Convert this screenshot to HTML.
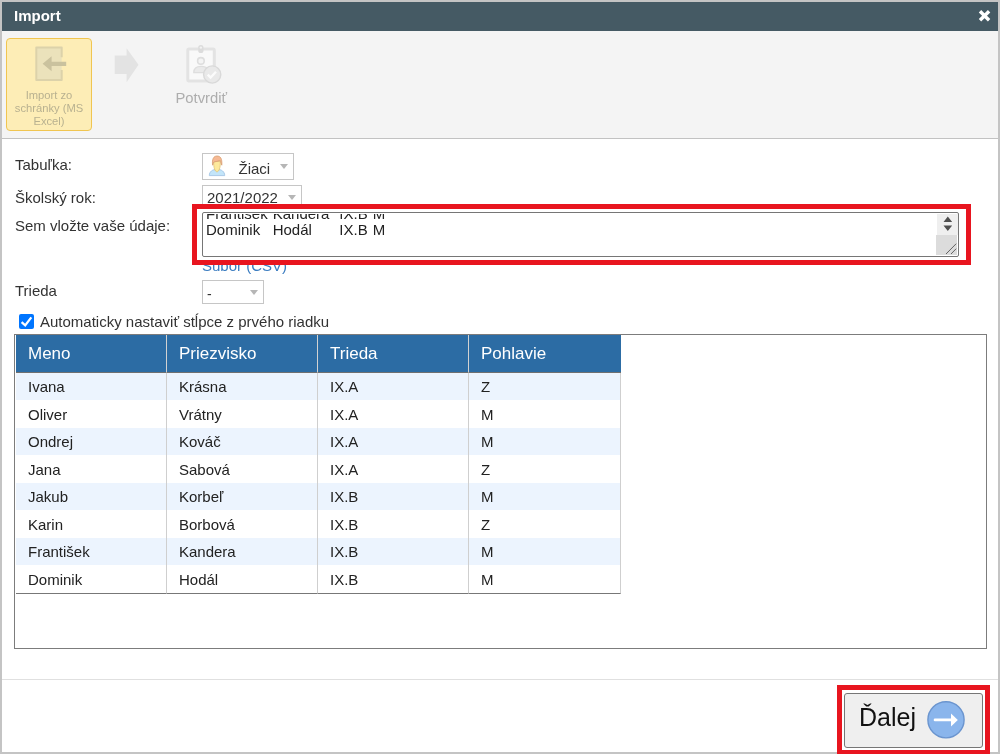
<!DOCTYPE html>
<html><head><meta charset="utf-8">
<style>
*{box-sizing:border-box;margin:0;padding:0}
html,body{width:1000px;height:754px;overflow:hidden;background:#c4c4c4;font-family:"Liberation Sans",sans-serif;position:relative}
.a{position:absolute}
.t{position:absolute;white-space:nowrap;line-height:1}
#dlg{left:2px;top:2px;width:996px;height:750px;background:#fff}
#hdr{left:2px;top:2px;width:996px;height:28.5px;background:#455a64}
#tb{left:2px;top:30.5px;width:996px;height:108px;background:#f4f4f4;border-bottom:1px solid #c2c2c2}
.lbl{font-size:15px;color:#333}
.sel{position:absolute;border:1px solid #c6c6c6;background:#fff}
.caret{position:absolute;width:0;height:0;border-left:4.6px solid transparent;border-right:4.6px solid transparent;border-top:5.5px solid #b6b6b6}
#grid{left:14px;top:334px;width:973px;height:315px;border:1px solid #7c7c7c;background:#fff}
table{border-collapse:separate;border-spacing:0;position:absolute;left:1px;top:0;font-size:15px;color:#222;table-layout:fixed;width:605px}
td,th{white-space:nowrap;text-align:left;font-weight:normal;padding:0 0 0 12px;overflow:hidden}
th{background:#2c6ca4;color:#fff;font-size:17px;height:38px;border-right:1px solid #d2d2d2;border-bottom:1px solid #707070}
th:last-child{border-right:0}
td{height:28px;border-right:1px solid #cfcfcf}
tr.o td{background:#ecf4fe;height:27px}
tr:last-child td{border-bottom:1px solid #777;height:29px}
</style></head><body>
<div id="root" style="position:absolute;left:0;top:0;width:1000px;height:754px;will-change:transform">
<div id="dlg" class="a"></div>
<div id="hdr" class="a"></div>
<div class="t" style="left:14px;top:8px;font-size:15px;font-weight:bold;color:#fff">Import</div>
<svg class="a" style="left:978px;top:9px" width="14" height="14" viewBox="0 0 14 14"><path d="M2 2.2 L11.1 11.3 M11.1 2.2 L2 11.3" stroke="#fff" stroke-width="3.4"/></svg>

<div id="tb" class="a"></div>
<!-- toolbar button -->
<div class="a" style="left:6px;top:38px;width:86px;height:93px;background:#fdedb6;border:1px solid #f0c550;border-radius:4px"></div>
<svg class="a" style="left:30px;top:44px" width="40" height="40" viewBox="0 0 40 40">
  <path d="M31.7 13.2 L31.7 3.4 L6.3 3.4 L6.3 36.1 L31.7 36.1 L31.7 26" fill="#ebe2bb" stroke="#dcd2aa" stroke-width="2" stroke-linejoin="round"/>
  <path d="M12.6 19.8 L21.6 12.2 L21.6 17.7 L36.2 17.7 L36.2 22.1 L21.6 22.1 L21.6 27.3 Z" fill="#cac29e"/>
</svg>
<div class="t" style="left:6px;top:89px;width:86px;text-align:center;font-size:11.2px;line-height:12.8px;color:#b8b190;white-space:normal">Import zo schránky (MS Excel)</div>
<!-- arrow -->
<svg class="a" style="left:112px;top:45.5px" width="30" height="40" viewBox="0 0 30 40"><path d="M2.7 9.6 L14.6 9.6 L14.6 2.3 L26.5 18.7 L14.6 36.2 L14.6 28 L2.7 28 Z" fill="#e3e3e3"/></svg>
<!-- confirm icon -->
<svg class="a" style="left:180px;top:40px" width="50" height="50" viewBox="0 0 50 50">
  <rect x="7.8" y="9.1" width="26.5" height="31.8" rx="1.2" fill="#f9f9f9" stroke="#e3e3e3" stroke-width="3"/>
  <rect x="18.2" y="5" width="5.3" height="8" rx="2.6" fill="#dcdcdc"/>
  <circle cx="20.85" cy="7.6" r="1.2" fill="#f2f2f2"/>
  <circle cx="20.9" cy="20.9" r="3.3" fill="#f4f4f4" stroke="#dedede" stroke-width="1.6"/>
  <path d="M13.8 32.6 C13.8 28.5 16.5 26.4 21 26.4 C25 26.4 27.5 28 28.5 30 L28.5 32.6 Z" fill="#eaeaea" stroke="#dedede" stroke-width="1.4"/>
  <circle cx="32.2" cy="34.5" r="8.6" fill="#e9e9e9" stroke="#d9d9d9" stroke-width="1.4"/>
  <path d="M27.7 34.6 L30.6 37.6 L36 31.8" fill="none" stroke="#fbfbfb" stroke-width="2.4"/>
</svg>
<div class="t" style="left:175.5px;top:91px;font-size:14.8px;color:#adadad">Potvrdiť</div>

<!-- form -->
<div class="t lbl" style="left:15px;top:156.5px">Tabuľka:</div>
<div class="t lbl" style="left:15px;top:189.5px">Školský rok:</div>
<div class="t lbl" style="left:15px;top:218px">Sem vložte vaše údaje:</div>
<div class="t lbl" style="left:15px;top:283px">Trieda</div>

<div class="sel" style="left:202px;top:153px;width:92px;height:27px"></div>
<svg class="a" style="left:204px;top:153px" width="28" height="26" viewBox="0 0 28 26">
  <path d="M5.3 22.6 C5.3 18.6 8.5 16.3 13 16.3 C17.5 16.3 20.7 18.6 20.7 22.6 Z" fill="#c3e5f9" stroke="#a3c4e4" stroke-width="0.9"/>
  <path d="M9.7 8.5 C9.5 15 11 18.6 13 18.8 C15 18.6 16.5 15 16.3 8.5 Z" fill="#fde99c" stroke="#e0c274" stroke-width="0.8"/>
  <path d="M8.6 12.2 C7.8 5.8 9.8 3 13 3 C16.4 3 18.3 5.4 17.8 12.2 C17.2 10.5 16.6 9.2 16.4 7.4 C14 8.2 11.8 8.6 9.9 9 C9.4 10 9 11 8.6 12.2 Z" fill="#f6b994" stroke="#d69c6e" stroke-width="0.75"/>
</svg>
<div class="t" style="left:238.5px;top:160.5px;font-size:15px;color:#333">Žiaci</div>
<div class="caret" style="left:280px;top:163.8px"></div>

<div class="sel" style="left:202px;top:185px;width:100px;height:24px"></div>
<div class="t" style="left:207px;top:190px;font-size:15px;color:#333">2021/2022</div>
<div class="caret" style="left:288px;top:194.8px"></div>

<div class="t" style="left:202px;top:258px;font-size:15px;color:#3a7cc0">Súbor (CSV)</div>

<!-- textarea -->
<div class="a" style="left:202px;top:212px;width:757px;height:45px;border:1px solid #767676;border-radius:2px;background:#fff;overflow:hidden">
  <div class="a" style="left:0;top:1px;width:730px;height:41px;overflow:hidden"><div class="t" style="left:3px;top:-8px;font-size:15px;line-height:16.2px;color:#222;white-space:pre;tab-size:8">František	Kandera	IX.B	M
Dominik	Hodál	IX.B	M</div></div>
  <div class="a" style="left:734px;top:1px;width:21px;height:21px;background:#efefef"></div>
  <svg class="a" style="left:740px;top:2.3px" width="10" height="17" viewBox="0 0 10 17"><path d="M0.5 7 L4.8 1.5 L9.2 7 Z M0.5 10.5 L9.2 10.5 L4.8 16 Z" fill="#505050"/></svg>
  <div class="a" style="left:733px;top:22px;width:21px;height:20px;background:#dcdcdc"></div>
  <svg class="a" style="left:742px;top:30px" width="14" height="12" viewBox="0 0 14 12"><path d="M1 11 L11.2 0.7 M6 11 L11.2 5.7" stroke="#555" stroke-width="0.9"/></svg>
</div>

<div class="sel" style="left:202px;top:280px;width:62px;height:24px"></div>
<div class="t" style="left:207px;top:287px;font-size:14px;color:#333">-</div>
<div class="caret" style="left:250px;top:289.5px"></div>

<!-- checkbox -->
<div class="a" style="left:19px;top:314px;width:15px;height:15px;background:#0075ff;border-radius:2px"></div>
<svg class="a" style="left:19px;top:314px" width="15" height="15" viewBox="0 0 15 15"><path d="M2.6 8.2 L6.2 11.4 L12.3 3.4" fill="none" stroke="#fff" stroke-width="2.3"/></svg>
<div class="t lbl" style="left:40px;top:314px">Automaticky nastaviť stĺpce z prvého riadku</div>

<!-- grid -->
<div id="grid" class="a">
<table>
<colgroup><col style="width:151px"><col style="width:151px"><col style="width:151px"><col style="width:152px"></colgroup>
<tr><th>Meno</th><th>Priezvisko</th><th>Trieda</th><th>Pohlavie</th></tr>
<tr class="o"><td>Ivana</td><td>Krásna</td><td>IX.A</td><td>Z</td></tr>
<tr><td>Oliver</td><td>Vrátny</td><td>IX.A</td><td>M</td></tr>
<tr class="o"><td>Ondrej</td><td>Kováč</td><td>IX.A</td><td>M</td></tr>
<tr><td>Jana</td><td>Sabová</td><td>IX.A</td><td>Z</td></tr>
<tr class="o"><td>Jakub</td><td>Korbeľ</td><td>IX.B</td><td>M</td></tr>
<tr><td>Karin</td><td>Borbová</td><td>IX.B</td><td>Z</td></tr>
<tr class="o"><td>František</td><td>Kandera</td><td>IX.B</td><td>M</td></tr>
<tr><td>Dominik</td><td>Hodál</td><td>IX.B</td><td>M</td></tr>
</table>
</div>

<!-- footer -->
<div class="a" style="left:2px;top:679px;width:996px;height:1px;background:#e0e0e0"></div>
<div class="a" style="left:844px;top:693px;width:139px;height:55px;background:#efefef;border:1px solid #767676;border-radius:3px"></div>
<div class="t" style="left:859px;top:705px;font-size:25px;color:#111">Ďalej</div>
<svg class="a" style="left:926px;top:700px" width="40" height="40" viewBox="0 0 40 40">
  <circle cx="20" cy="19.8" r="18.1" fill="#8ab5ec" stroke="#6b95cf" stroke-width="1.4"/>
  <path d="M9 19.9 L26 19.9" stroke="#fff" stroke-width="2.6" stroke-linecap="round"/>
  <path d="M25 13.4 L31.8 19.9 L25 26.4 Z" fill="#fff"/>
</svg>

<!-- red highlights -->
<div class="a" style="left:192px;top:204px;width:779px;height:61px;border:5px solid #e8151f"></div>
<div class="a" style="left:837px;top:685px;width:153px;height:69px;border:5px solid #e8151f;border-bottom-width:4px"></div>
</div>
</body></html>
